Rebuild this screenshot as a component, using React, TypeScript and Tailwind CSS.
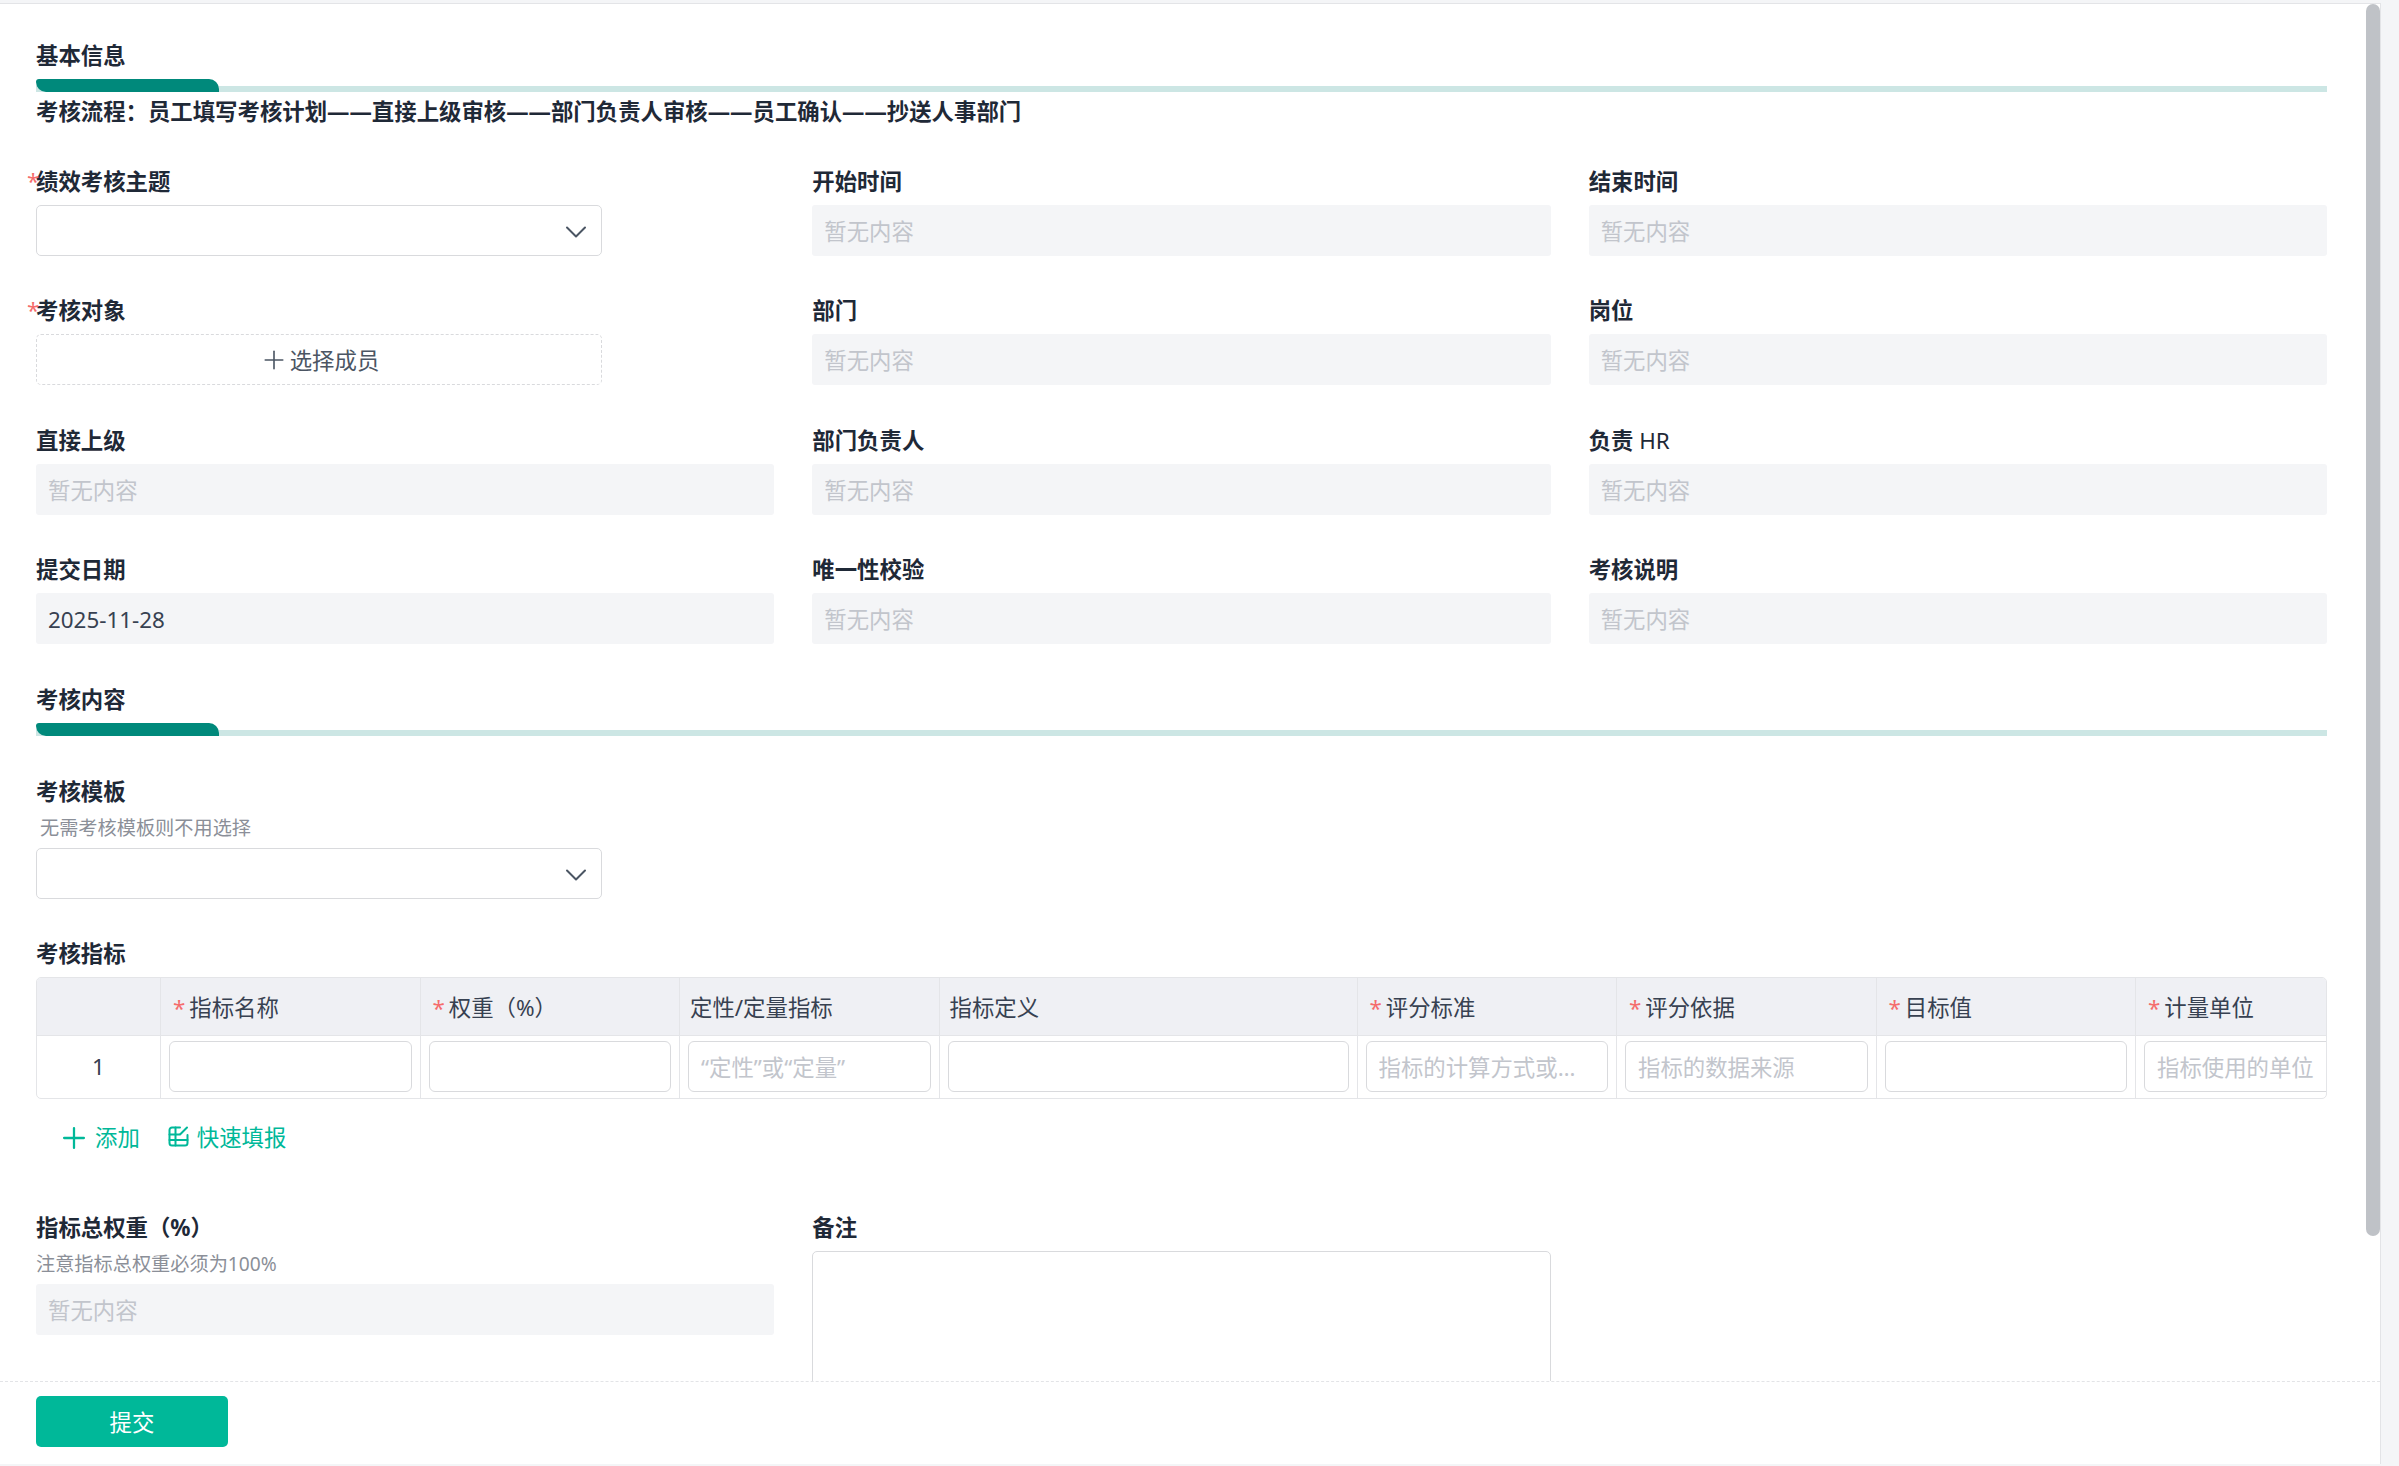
import { ChevronDown, Plus } from "lucide-react";

function Label({ children, required }: { children: React.ReactNode; required?: boolean }) {
  return (
    <div className="relative h-[30px] mb-[9px] text-[22.4px] leading-[31px] font-bold text-[#1f2937]">
      {required && <span className="absolute left-[-9px] top-[-1px] font-normal text-[#f56c6c]">*</span>}
      {children}
    </div>
  );
}

function Empty({ value }: { value?: string }) {
  return (
    <div className={`h-[51px] bg-[#f4f5f7] rounded-[3px] px-3 text-[22.4px] leading-[53px] ${value ? "text-[#374151]" : "text-[#c2c5cc]"}`}>
      {value ?? "暂无内容"}
    </div>
  );
}

function Select() {
  return (
    <div className="w-[566px] h-[51px] border border-[#d9dadd] rounded-[5px] bg-white flex items-center justify-end pr-[7px]">
      <ChevronDown size={36} strokeWidth={1.33} className="text-[#4b5563] mt-[2px]" />
    </div>
  );
}

function Field({ label, value, required }: { label: React.ReactNode; value?: string; required?: boolean }) {
  return (
    <div>
      <Label required={required}>{label}</Label>
      <Empty value={value} />
    </div>
  );
}

function Section({ title }: { title: string }) {
  return (
    <div>
      <div className="h-[30px] text-[22.4px] leading-[31px] font-bold text-[#1f2937]">{title}</div>
      <div className="relative mt-[9px] h-[13px] flex items-end">
        <div className="w-full h-[6px] bg-[#cce6e4]" />
        <div className="absolute left-0 top-0 h-[13px] w-[183px] bg-[#00897b] rounded-tr-[10px] rounded-bl-[10px] rounded-tl-[3px]" />
      </div>
    </div>
  );
}

const cols = [
  { name: "指标名称", req: true, w: 259.5 },
  { name: "权重（%）", req: true, w: 259.5 },
  { name: "定性/定量指标", w: 259.5, ph: "“定性”或“定量”" },
  { name: "指标定义", w: 418 },
  { name: "评分标准", req: true, w: 259.5, ph: "指标的计算方式或规则" },
  { name: "评分依据", req: true, w: 259.5, ph: "指标的数据来源" },
  { name: "目标值", req: true, w: 259.5 },
  { name: "计量单位", req: true, w: 259.5, ph: "指标使用的单位" },
];

function Table() {
  return (
    <div className="overflow-hidden rounded-[5px] border border-[#e4e5e8] w-[2291px]">
      <table className="table-fixed border-collapse w-[2339.5px]">
        <colgroup>
          <col className="w-[123.5px]" />
          {cols.map((c) => (
            <col key={c.name} style={{ width: c.w }} />
          ))}
        </colgroup>
        <thead>
          <tr className="h-[57px] bg-[#eff0f4] border-b border-[#e4e5e8]">
            <th />
            {cols.map((c) => (
              <th key={c.name} className="border-l border-[#e4e5e8] px-[10px] pt-[2px] text-left text-[22.4px] font-normal text-[#374151]">
                {c.req && <span className="text-[#f56c6c] mr-[4px] ml-[2px]">*</span>}
                {c.name}
              </th>
            ))}
          </tr>
        </thead>
        <tbody>
          <tr className="h-[63px]">
            <td className="text-center text-[22.4px] text-[#374151]">1</td>
            {cols.map((c) => (
              <td key={c.name} className="border-l border-[#e4e5e8] pl-2 pr-2">
                <input
                  readOnly
                  placeholder={c.ph}
                  className="block w-full h-[51px] border border-[#d9dadd] rounded-[6px] px-3 pt-[2px] text-[22.4px] outline-none bg-white placeholder:text-[#c2c5cc] text-ellipsis"
                />
              </td>
            ))}
          </tr>
        </tbody>
      </table>
    </div>
  );
}

export default function App() {
  return (
    <div className="h-screen w-full overflow-hidden bg-[#f4f5f7] pt-[3px] pb-[2px] font-['Noto_Sans','Noto_Sans_CJK_SC',sans-serif]">
      <div className="h-full w-[2381px] bg-white border-t border-r border-[#e3e4e7] flex flex-col">
        <div className="flex-1 min-h-0 flex overflow-hidden">
          <div className="w-[2366px] shrink-0 pl-[36px] pr-[39px] pt-[36px]">
            <Section title="基本信息" />
            <div className="mt-[4px] h-[30px] text-[22.4px] leading-[31px] font-bold text-[#1f2937]">
              考核流程：员工填写考核计划——直接上级审核——部门负责人审核——员工确认——抄送人事部门
            </div>
            <div className="mt-[40px] grid grid-cols-3 gap-x-[38px] gap-y-[39.4px]">
              <div>
                <Label required>绩效考核主题</Label>
                <Select />
              </div>
              <Field label="开始时间" />
              <Field label="结束时间" />
              <div>
                <Label required>考核对象</Label>
                <div className="w-[566px] h-[51px] border border-dashed border-[#d9dadd] rounded-[5px] flex items-center justify-center gap-[1px] text-[22.4px] text-[#4b5563]">
                  <Plus size={30} strokeWidth={1.3} />
                  <span className="pt-[2px]">选择成员</span>
                </div>
              </div>
              <Field label="部门" />
              <Field label="岗位" />
              <Field label="直接上级" />
              <Field label="部门负责人" />
              <Field label={<>负责 <span className="font-normal">HR</span></>} />
              <Field label="提交日期" value="2025-11-28" />
              <Field label="唯一性校验" />
              <Field label="考核说明" />
            </div>
            <div className="mt-[40px]">
              <Section title="考核内容" />
            </div>
            <div className="mt-[40px] h-[30px] text-[22.4px] leading-[31px] font-bold text-[#1f2937]">考核模板</div>
            <div className="mt-[9px] ml-[4px] h-[26px] text-[19.2px] leading-[26px] text-[#8b8f98]">无需考核模板则不用选择</div>
            <div className="mt-[7px]">
              <Select />
            </div>
            <div className="mt-[39px]">
              <Label>考核指标</Label>
            </div>
            <Table />
            <div className="mt-[21px] flex items-center h-[36px] text-[22.4px] text-[#00b899]">
              <Plus size={34} strokeWidth={1.6} className="ml-[21px] shrink-0" />
              <span className="ml-[4px]">添加</span>
              <svg width="21" height="21" viewBox="0 0 21 21" fill="none" stroke="currentColor" strokeWidth="2" strokeLinecap="round" strokeLinejoin="round" className="ml-[28px] mb-[3px] shrink-0">
                <path d="M12 1.5H4A2.5 2.5 0 0 0 1.5 4v13A2.5 2.5 0 0 0 4 19.5h13a2.5 2.5 0 0 0 2.5-2.5V9" />
                <path d="M1.5 8.5h10M1.5 14h18M7.5 1.5v18M12 8.5l7-7" />
              </svg>
              <span className="ml-[8px]">快速填报</span>
            </div>
            <div className="mt-[57px] grid grid-cols-3 gap-x-[38px]">
              <div>
                <div className="h-[30px] text-[22.4px] leading-[30px] font-bold text-[#1f2937]">指标总权重（%）</div>
                <div className="mt-[8px] h-[26px] text-[19.2px] leading-[26px] text-[#8b8f98]">注意指标总权重必须为100%</div>
                <div className="mt-[7px]">
                  <Empty />
                </div>
              </div>
              <div>
                <div className="h-[30px] text-[22.4px] leading-[30px] font-bold text-[#1f2937]">备注</div>
                <div className="mt-[8px] h-[200px] border border-[#d9dadd] rounded-[5px]" />
              </div>
            </div>
          </div>
          <div className="w-[14px] shrink-0">
            <div className="h-[1232px] w-[14px] bg-[#bfc2c7] rounded-full" />
          </div>
        </div>
        <div className="h-[83px] shrink-0 border-t border-dashed border-[#e3e4e7] pl-[36px] pt-[14px]">
          <button className="w-[192px] h-[51px] pt-[2px] bg-[#00b899] rounded-[5px] text-white text-[22.4px]">提交</button>
        </div>
      </div>
    </div>
  );
}
